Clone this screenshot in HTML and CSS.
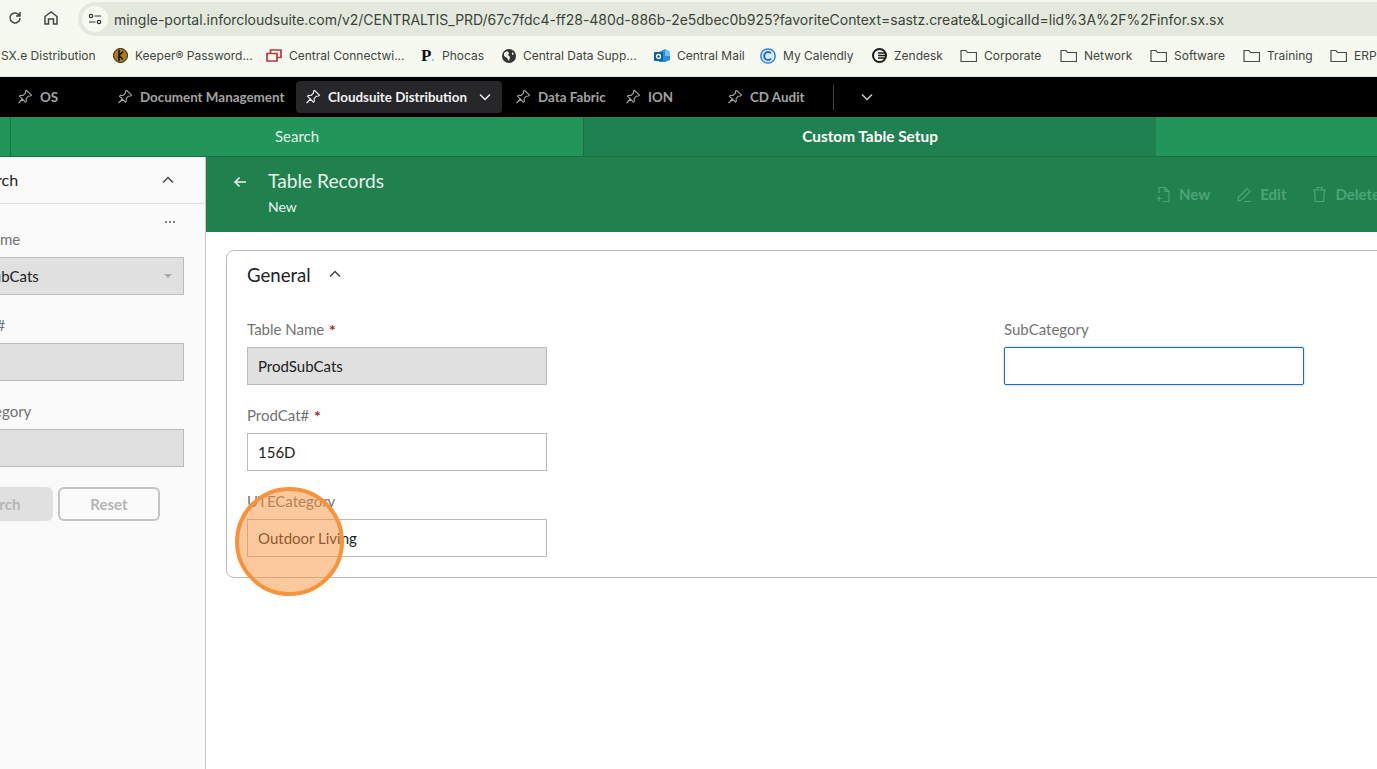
FILE: index.html
```html
<!DOCTYPE html>
<html lang="en">
<head>
  <meta charset="UTF-8">
  <title>Table Records</title>
  <link rel="stylesheet" href="styles.css">
</head>
<body>
  <svg class="defs" width="0" height="0">
    <symbol id="pin" viewBox="0 0 16 16"><path d="M9.600 1.500l4.900 4.700-1.100.8-2.100.2-2.200 2.400.2 2.700-.9.900-2.600-2.800-4.300 3.800 3.800-4.300-2.800-2.600.9-.9 2.700.1 2.300-2.300.1-2.100z" fill="none" stroke="currentColor" stroke-width="1.100"/></symbol>
    <symbol id="chev" viewBox="0 0 12 8"><path d="M1 1.500l5 5 5-5" fill="none" stroke="currentColor" stroke-width="1.500"/></symbol>
    <symbol id="folder" viewBox="0 0 17 14"><path d="M1 12.500V1.500h5l1.500 2h9v9z" fill="none" stroke="currentColor" stroke-width="1.200"/></symbol>
  </svg>

  <!-- Browser toolbar -->
  <div class="browser-bar">
    <svg class="tool-icon reload" width="16" height="16" viewBox="0 0 16 16"><path d="M13 8a5 5 0 1 1-1.500-3.600L13 6M13 2v4H9" fill="none" stroke="#444" stroke-width="1.500"/></svg>
    <svg class="tool-icon home" width="16" height="16" viewBox="0 0 16 16"><path d="M2 14V6.500L8 2l6 4.500V14h-3.500V9h-5v5z" fill="none" stroke="#444" stroke-width="1.500"/></svg>
    <div class="address">
      <span class="site-btn">
        <svg width="14" height="12" viewBox="0 0 14 12"><circle cx="3" cy="3" r="1.700" fill="none" stroke="#333" stroke-width="1.200"/><path d="M6.500 3H13M1 9h6.500" stroke="#333" stroke-width="1.200"/><circle cx="11" cy="9" r="1.700" fill="none" stroke="#333" stroke-width="1.200"/></svg>
      </span>
      <span class="url">mingle-portal.inforcloudsuite.com/v2/CENTRALTIS_PRD/67c7fdc4-ff28-480d-886b-2e5dbec0b925?favoriteContext=sastz.create&amp;LogicalId=lid%3A%2F%2Finfor.sx.sx</span>
    </div>
  </div>

  <!-- Bookmarks -->
  <div class="bookmarks">
    <span class="mark first">SX.e Distribution</span>
    <span class="mark w-keeper"><svg width="15" height="15" viewBox="0 0 15 15"><circle cx="7.500" cy="7.500" r="7" fill="#a67c1e"/><circle cx="7.500" cy="7.500" r="7" fill="none" stroke="#2a1d08" stroke-width="1"/><path d="M6 2v11M6 7.500l4-4M6 7.500l4 4" fill="none" stroke="#1c1305" stroke-width="1.600"/></svg>Keeper® Password...</span>
    <span class="mark w-connect"><svg width="16" height="13" viewBox="0 0 16 13"><path d="M1 4.500h10v7.500H1zM4.500 4V1H15v7.500h-3.500" fill="none" stroke="#b8383a" stroke-width="1.700"/></svg>Central Connectwi...</span>
    <span class="mark w-phocas"><span class="phocas">P<i>.</i></span>Phocas</span>
    <span class="mark w-data"><svg width="14" height="14" viewBox="0 0 14 14"><circle cx="7" cy="7" r="7" fill="#333"/><path d="M2 4l3-2 2 2-1 2 2 2-1 4-2-3-3-2zM10 3l2 2-2 1z" fill="#f6f9f0"/></svg>Central Data Supp...</span>
    <span class="mark w-mail"><svg width="16" height="15" viewBox="0 0 16 15"><path d="M5 4l6-3 5 3v8l-5 2H5z" fill="#2a8fdc"/><path d="M11 1l5 3v4h-5z" fill="#63c6f2"/><rect y="4" width="9" height="9" rx="1" fill="#0f5fa8"/><circle cx="4.500" cy="8.500" r="2" fill="none" stroke="#fff" stroke-width="1.300"/></svg>Central Mail</span>
    <span class="mark w-cal"><svg width="16" height="16" viewBox="0 0 16 16"><circle cx="8" cy="8" r="7.200" fill="#d8ecfb" stroke="#1f6fe0" stroke-width="1.300"/><path d="M11 5.200a4 4 0 1 0 0 5.600" fill="none" stroke="#1f6fe0" stroke-width="2"/></svg>My Calendly</span>
    <span class="mark w-zen"><svg width="15" height="15" viewBox="0 0 15 15"><circle cx="7.500" cy="7.500" r="6.500" fill="none" stroke="#1d1d1d" stroke-width="2"/><path d="M6 5h7M6 7.500h8M6 10h7" stroke="#1d1d1d" stroke-width="1.300"/></svg>Zendesk</span>
    <span class="mark w-corp"><svg class="fold" width="17" height="14"><use href="#folder"/></svg>Corporate</span>
    <span class="mark w-net"><svg class="fold" width="17" height="14"><use href="#folder"/></svg>Network</span>
    <span class="mark w-soft"><svg class="fold" width="17" height="14"><use href="#folder"/></svg>Software</span>
    <span class="mark w-train"><svg class="fold" width="17" height="14"><use href="#folder"/></svg>Training</span>
    <span class="mark"><svg class="fold" width="17" height="14"><use href="#folder"/></svg>ERP</span>
  </div>

  <!-- App tabs -->
  <nav class="app-nav">
    <a class="app-tab t-os"><svg width="16" height="16"><use href="#pin"/></svg>OS</a>
    <a class="app-tab t-doc"><svg width="16" height="16"><use href="#pin"/></svg>Document Management</a>
    <a class="app-tab active"><svg width="16" height="16"><use href="#pin"/></svg>Cloudsuite Distribution<svg class="chev" width="12" height="8"><use href="#chev"/></svg></a>
    <a class="app-tab t-fabric"><svg width="16" height="16"><use href="#pin"/></svg>Data Fabric</a>
    <a class="app-tab t-ion"><svg width="16" height="16"><use href="#pin"/></svg>ION</a>
    <a class="app-tab t-audit"><svg width="16" height="16"><use href="#pin"/></svg>CD Audit</a>
    <span class="nav-divider"></span>
    <svg class="more-chev" width="12" height="8"><use href="#chev"/></svg>
  </nav>

  <div class="page-tabs">
    <div class="page-tab stub"></div>
    <div class="page-tab search-tab">Search</div>
    <div class="page-tab current">Custom Table Setup</div>
  </div>

  <div class="workspace">
    <!-- Search sidebar -->
    <aside class="sidebar">
      <div class="sidebar-inner">
        <div class="side-head">
          <span>Search</span>
          <svg class="up" width="12" height="8"><use href="#chev"/></svg>
        </div>
        <div class="dots"><i></i><i></i><i></i></div>
        <div class="side-field">
          <label>Table Name</label>
          <div class="field side-input readonly">ProdSubCats<span class="caret"></span></div>
        </div>
        <div class="side-field">
          <label>ProdCat#</label>
          <div class="field side-input readonly"></div>
        </div>
        <div class="side-field">
          <label>UTECategory</label>
          <div class="field side-input readonly"></div>
        </div>
        <div class="side-actions">
          <button class="btn-search">Search</button>
          <button class="btn-reset">Reset</button>
        </div>
      </div>
    </aside>

    <main class="content">
      <div class="record-head">
        <svg class="back" width="14" height="12" viewBox="0 0 14 12"><path d="M13 6H2M6.500 1.500L2 6l4.500 4.500" fill="none" stroke="currentColor" stroke-width="1.600"/></svg>
        <div class="record-title">
          <h1>Table Records</h1>
          <p>New</p>
        </div>
        <div class="record-actions">
          <span class="act"><svg width="16" height="17" viewBox="0 0 16 17"><path d="M4 7V1.500h6l4 4V15.500H8M10 1.500v4h4M4 10v5M1.500 12.500h5" fill="none" stroke="currentColor" stroke-width="1.200"/></svg>New</span>
          <span class="act"><svg width="16" height="17" viewBox="0 0 16 17"><path d="M2 15l.5-4L11 2.500l3 3L5.500 14zM8 15.500h7" fill="none" stroke="currentColor" stroke-width="1.200"/></svg>Edit</span>
          <span class="act"><svg width="15" height="17" viewBox="0 0 15 17"><path d="M1 4h13M5 4V1.500h5V4M2.500 4l.8 11.500h8.400L12.500 4" fill="none" stroke="currentColor" stroke-width="1.200"/></svg>Delete</span>
        </div>
      </div>

      <section class="card">
        <div class="card-head">
          <h2>General</h2>
          <svg class="up" width="12" height="8"><use href="#chev"/></svg>
        </div>
        <div class="card-body">
          <div class="col">
            <div class="form-group">
              <label>Table Name <b>*</b></label>
              <div class="field readonly">ProdSubCats</div>
            </div>
            <div class="form-group">
              <label>ProdCat# <b>*</b></label>
              <div class="field">156D</div>
            </div>
            <div class="form-group">
              <label>UTECategory</label>
              <div class="field">Outdoor Living</div>
            </div>
          </div>
          <div class="col">
            <div class="form-group">
              <label>SubCategory</label>
              <div class="field focused"></div>
            </div>
          </div>
        </div>
      </section>
    </main>
  </div>

  <!-- Click highlight -->
  <div class="click-mark"></div>
</body>
</html>
```

FILE: styles.css
```css
/* General */
body {
  margin: 0;
  height: 769px;
  overflow: hidden;
  background: #fff;
  font-family: 'Lato', sans-serif;
  color: #222;
}

.defs {
  position: absolute;
}

svg {
  flex: none;
}

/* Browser toolbar */
.browser-bar {
  height: 36px;
  background: #f6f9f0;
  display: flex;
  align-items: center;
}

.tool-icon.reload {
  margin-left: 7px;
}

.tool-icon.home {
  margin-left: 20px;
}

.address {
  margin-left: 19px;
  margin-top: 2px;
  flex: 1;
  height: 34px;
  background: #e3eadd;
  border-radius: 17px 0 0 17px;
  display: flex;
  align-items: center;
  padding-left: 4px;
}

.site-btn {
  width: 26px;
  height: 26px;
  border-radius: 50%;
  background: #f6f9f0;
  display: flex;
  align-items: center;
  justify-content: center;
}

.url {
  margin-left: 6px;
  font-family: 'Inter', sans-serif;
  font-size: 14px;
  letter-spacing: -0.025px;
  color: #3b4339;
  white-space: nowrap;
}

/* Bookmarks */
.bookmarks {
  height: 41px;
  padding-bottom: 1px;
  background: #f6f9f0;
  border-bottom: 1px solid #dfe3da;
  box-sizing: border-box;
  display: flex;
  align-items: center;
  font-family: 'Inter', sans-serif;
  font-size: 12px;
  color: #3f463e;
  white-space: nowrap;
}

.mark {
  display: flex;
  align-items: center;
  gap: 7px;
  flex: none;
}

.mark.first { width: 113px; padding-left: 1px; box-sizing: border-box; }
.w-keeper { width: 153px; }
.w-connect { width: 155px; }
.w-phocas { width: 81px; }
.w-data { width: 152px; }
.w-mail { width: 106px; }
.w-cal { width: 112px; }
.w-zen { width: 88px; }
.w-corp { width: 100px; }
.w-net { width: 90px; }
.w-soft { width: 93px; }
.w-train { width: 87px; }

.fold {
  color: #4a4a4a;
}

.phocas {
  width: 14px;
  font-family: 'Liberation Serif', serif;
  font-weight: bold;
  font-size: 17px;
  color: #111;
}

.phocas i {
  color: #4bb6c4;
  font-style: normal;
  font-size: 10px;
}

/* App tabs */
.app-nav {
  height: 40px;
  background: #000;
  display: flex;
  align-items: center;
  font-size: 13.4px;
  font-weight: 700;
  color: #a3a3a3;
  white-space: nowrap;
}

.app-tab {
  height: 32px;
  padding: 0 9px;
  display: flex;
  align-items: center;
  gap: 7px;
  flex: none;
  border-radius: 4px;
  box-sizing: border-box;
}

.t-os { margin-left: 8px; width: 100px; }
.t-doc { width: 188px; }
.t-fabric { margin-left: 4px; width: 110px; }
.t-ion { width: 102px; }
.t-audit { width: 115px; }

.app-tab.active {
  width: 206px;
  background: #27272a;
  color: #f2f2f2;
}

.chev {
  margin-left: 5px;
}

.nav-divider {
  width: 1px;
  height: 25px;
  background: #444;
}

.more-chev {
  margin-left: 27px;
  color: #ccc;
}

/* Page tabs */
.page-tabs {
  height: 40px;
  background: #22955a;
  border-bottom: 1px solid #1b6f44;
  box-sizing: border-box;
  display: flex;
  color: #e4f3ea;
  font-size: 15px;
  line-height: 39px;
}

.page-tab {
  text-align: center;
  box-sizing: border-box;
}

.stub {
  width: 11px;
  border-right: 1px solid #1b6f44;
}

.search-tab {
  width: 573px;
  border-right: 1px solid #1b6f44;
}

.current {
  width: 572px;
  background: #208150;
  color: #fff;
  font-weight: 700;
  font-size: 15.400px;
}

/* Workspace */
.workspace {
  display: flex;
  height: 612px;
}

.sidebar {
  width: 206px;
  flex: none;
  overflow: hidden;
  background: #fafafa;
  border-right: 1px solid #c8c8c8;
  box-sizing: border-box;
  display: flex;
  justify-content: flex-end;
}

.sidebar-inner {
  width: 262px;
  flex: none;
  box-sizing: border-box;
  padding-right: 21px;
}

.side-head {
  height: 47px;
  width: 261px;
  border-bottom: 1px solid #ddd;
  display: flex;
  align-items: center;
  justify-content: space-between;
  padding: 0 30px 1px 28px;
  box-sizing: border-box;
  font-size: 16px;
}

.up {
  transform: rotate(180deg);
  color: #444;
}

.dots {
  height: 25px;
  display: flex;
  justify-content: flex-end;
  gap: 2px;
  padding: 17px 9px 0 0;
  box-sizing: border-box;
}

.dots i {
  width: 2px;
  height: 2px;
  background: #555;
  border-radius: 50%;
}

.side-field {
  margin-bottom: 20px;
}

.side-field label,
.form-group label {
  display: block;
  font-size: 15px;
  color: #737373;
  height: 20px;
  line-height: 20px;
  margin-bottom: 8px;
}

.field {
  height: 38px;
  box-sizing: border-box;
  border: 1px solid #bbb;
  padding-left: 10px;
  font-size: 15px;
  line-height: 36px;
  color: #222;
  background: #fff;
}

.side-input {
  position: relative;
}

.readonly {
  background: #e0e0e0;
}

.caret {
  position: absolute;
  right: 11px;
  top: 16px;
  border-left: 4px solid transparent;
  border-right: 4px solid transparent;
  border-top: 4px solid #aaa;
}

.side-actions {
  display: flex;
  gap: 5px;
}

.side-actions button {
  height: 34px;
  border-radius: 6px;
  font-family: inherit;
  font-size: 15px;
  font-weight: 700;
  color: #b5b5b5;
}

.btn-search {
  width: 110px;
  border: none;
  background: #e0e0e0;
}

.btn-reset {
  width: 102px;
  border: 2px solid #c4c4c4;
  background: #fafafa;
}

/* Content */
.content {
  flex: 1;
  min-width: 0;
}

.record-head {
  height: 75px;
  background: #20814f;
  display: flex;
  color: #e8f3ed;
}

.back {
  margin: 19px 21px 0 27px;
}

.record-title h1 {
  margin: 11px 0 0;
  font-size: 19.200px;
  font-weight: 400;
  line-height: 26px;
}

.record-title p {
  margin: 4px 0 0;
  font-size: 14px;
  line-height: 18px;
}

.record-actions {
  margin-left: auto;
  margin-right: -3px;
  padding-top: 27px;
  display: flex;
  gap: 26px;
  color: #4ea377;
  font-size: 15px;
  font-weight: 700;
  height: 20px;
}

.act {
  display: flex;
  align-items: center;
  gap: 8px;
}

.card {
  margin: 18px -40px 0 20px;
  height: 328px;
  box-sizing: border-box;
  border: 1px solid #bbb;
  border-radius: 8px;
  background: #fff;
}

.card-head {
  height: 48px;
  padding-left: 20px;
  display: flex;
  align-items: center;
  gap: 18px;
}

.card-head .up {
  margin-bottom: 3px;
}

.card-head h2 {
  margin: 0;
  font-size: 18.600px;
  font-weight: 400;
  color: #222;
}

.card-body {
  display: flex;
  padding: 20px 0 0 20px;
}

.col {
  width: 757px;
  flex: none;
}

.form-group {
  width: 300px;
  margin-bottom: 20px;
}

.form-group label b {
  color: #b3162c;
  font-weight: 700;
  font-size: 16px;
  line-height: 16px;
  margin-left: 1px;
  vertical-align: -1px;
}

.focused {
  border-color: #1f69bd;
  box-shadow: 0 0 2px rgba(26, 95, 180, 0.5);
  border-radius: 2px;
}

/* Click highlight */
.click-mark {
  position: absolute;
  left: 235px;
  top: 487px;
  width: 109px;
  height: 109px;
  box-sizing: border-box;
  border: 4px solid #f7933a;
  border-radius: 50%;
  background: rgba(249, 145, 60, 0.5);
}
```
